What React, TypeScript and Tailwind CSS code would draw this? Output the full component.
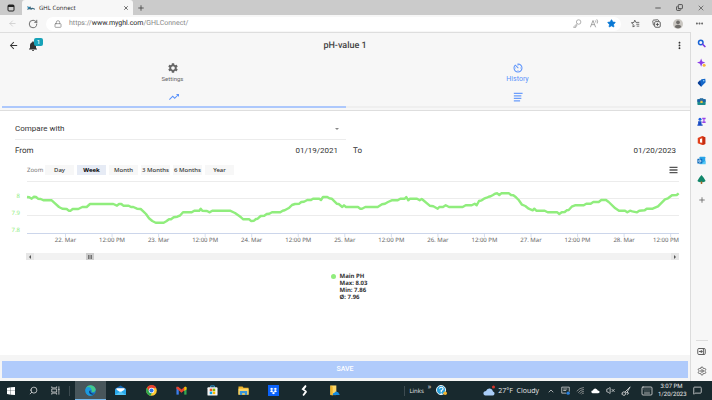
import React from "react";
import {
  MdArrowBack,
  MdNotifications,
  MdMoreVert,
  MdSettings,
  MdTrendingUp,
  MdAvTimer,
} from "react-icons/md";
import {
  ArrowLeft,
  ChevronUp,
  Keyboard,
  Lock,
  Minus,
  MoreHorizontal,
  Plus,
  RotateCw,
  Search,
  Settings,
  Star,
  Copy,
  MessageSquare,
  VolumeX,
  X,
} from "lucide-react";

type ArtProps = { className?: string; children: React.ReactNode };

function Art({ className = "size-[10px]", children }: ArtProps) {
  return (
    <svg viewBox="0 0 24 24" className={className} fill="none" aria-hidden="true">
      {children}
    </svg>
  );
}

/* ---------- Browser chrome ---------- */

function TabStrip() {
  return (
    <div className="flex h-[15px] shrink-0 items-center bg-[#cbcbcb] text-[#444]">
      <button aria-label="Tab actions" className="flex w-[22px] justify-center">
        <Art className="size-[8px]">
          <rect x="3" y="3" width="18" height="18" rx="3" stroke="#222" strokeWidth="3" />
          <path d="M3 3h18v6H3z" fill="#222" />
        </Art>
      </button>
      <div className="flex h-full w-[111px] items-center rounded-t-[3px] bg-[#f7f7f7] pr-1 pl-[5px]">
        <svg viewBox="0 0 24 14" className="h-[6px] w-[8px]" aria-hidden="true">
          <path d="M0 2l7 2 3-2 2 5 5-1 7 3v3l-7-2-4 2-5-1-8 1 3-5z" fill="#3e6a80" />
          <path d="M2 3l6 2-4 4z" fill="#2596c9" />
        </svg>
        <span className="ml-1 flex-1 text-[6px] leading-[8px] text-[#222]">GHL Connect</span>
        <button aria-label="Close tab">
          <X className="size-[6px]" strokeWidth={3} />
        </button>
      </div>
      <button aria-label="New tab" className="ml-1">
        <Plus className="size-[8px]" strokeWidth={2.5} />
      </button>
      <div className="ml-auto flex gap-[14px] pr-[7px]">
        <button aria-label="Minimize">
          <Minus className="size-[8px]" strokeWidth={2.5} />
        </button>
        <button aria-label="Restore">
          <Copy className="size-[7px] -scale-x-100 rotate-180" strokeWidth={3} />
        </button>
        <button aria-label="Close window">
          <X className="size-[8px]" strokeWidth={2} />
        </button>
      </div>
    </div>
  );
}

function Toolbar() {
  return (
    <div className="flex h-[17px] shrink-0 items-center bg-[#f7f7f7] pr-2 pl-2 text-[#555]">
      <button aria-label="Back" className="text-[#c8c8c8]">
        <ArrowLeft className="size-[9px]" />
      </button>
      <button aria-label="Reload" className="ml-[11px]">
        <RotateCw className="size-[10px]" />
      </button>
      <div className="ml-2 flex h-[14px] flex-1 items-center rounded-full bg-white pr-[5px] pl-2">
        <Lock className="size-[8px] text-[#777]" />
        <a href="#top" className="ml-[7px] flex-1 font-[Roboto,sans-serif] text-[7px] leading-[9px] text-[#888]">
          https://<span className="text-[#222]">www.myghl.com</span>/GHLConnect/
        </a>
        <div className="flex items-center gap-2">
          <button aria-label="Passwords">
            <Art className="size-[9px]">
              <circle cx="15" cy="8" r="6" stroke="#999" strokeWidth="2" />
              <path d="M11 12l-9 9v2h5v-4h3v-4" stroke="#999" strokeWidth="2" />
            </Art>
          </button>
          <button aria-label="Read aloud">
            <Art className="size-[9px]">
              <path d="M1 22L8 4l7 18M4 15h8M14 4q2 2 1 5M18 1q4 5 1 11" stroke="#888" strokeWidth="2" />
            </Art>
          </button>
          <button aria-label="Favorite">
            <Star className="size-[9px] fill-[#0a78d4] text-[#0a78d4]" />
          </button>
        </div>
      </div>
      <div className="ml-[10px] flex items-center gap-[12px]">
        <button aria-label="Favorites">
          <Art className="size-[9px]">
            <path d="M10 3l-2 6-7 1 5 4-1 7 6-3M10 3l3 6h9M14 14h8M15 19h7" stroke="#444" strokeWidth="2" />
          </Art>
        </button>
        <button aria-label="Collections">
          <Art className="size-[9px]">
            <rect x="7" y="7" width="15" height="15" rx="3" stroke="#444" strokeWidth="2.2" />
            <path d="M14.500 10.500v8M10.500 14.500h8M4 17l-2-11q0-2 2-3l11-1q2 0 3 3" stroke="#444" strokeWidth="2.200" />
          </Art>
        </button>
        <button aria-label="Profile">
          <Art className="size-[10px]">
            <circle cx="12" cy="12" r="12" fill="#c9c6c1" />
            <circle cx="12" cy="8" r="4.500" fill="#6f6d6a" />
            <path d="M4 19q1-5 8-5t8 5q-8 7-16 0z" fill="#6f6d6a" />
          </Art>
        </button>
        <button aria-label="Settings and more">
          <MoreHorizontal className="size-[9px]" strokeWidth={3} />
        </button>
      </div>
    </div>
  );
}

const sideIcons: { label: string; art: React.ReactNode }[] = [
  {
    label: "Search",
    art: (
      <>
        <circle cx="10" cy="9" r="6" stroke="#1763d6" strokeWidth="4" />
        <path d="M15 14l6 6" stroke="#7a3be0" strokeWidth="4.500" strokeLinecap="round" />
      </>
    ),
  },
  {
    label: "Discover",
    art: (
      <>
        <path d="M11 1l3 8 8 3-8 3-3 8-3-8-8-3 8-3z" fill="#8a3ce8" />
        <circle cx="19" cy="19" r="4" fill="#f6b73c" />
      </>
    ),
  },
  {
    label: "Shopping",
    art: (
      <>
        <path d="M12 3l10-1 1 9-12 12-9-9z" fill="#1467c9" />
        <path d="M2 12l6-6 4 17-9-8z" fill="#0b3f96" />
        <circle cx="18" cy="7" r="2" fill="#9fdcff" />
      </>
    ),
  },
  {
    label: "Tools",
    art: (
      <>
        <path d="M8 7V4h8v3" stroke="#2a6b9c" strokeWidth="2" />
        <rect x="1" y="6" width="22" height="15" rx="2" fill="#1d8b8b" />
        <path d="M1 6h22v7H1z" fill="#1a5fa8" />
        <path d="M9 10h6v6H9z" fill="#f5c542" />
      </>
    ),
  },
  {
    label: "Games",
    art: (
      <>
        <circle cx="8" cy="6" r="4" fill="#1a5fe0" />
        <path d="M3 11h9v9h3v3H1v-3h2z" fill="#184bc4" />
        <path d="M14 2h9v4h-3v6h3v4h-9v-4h3V6h-3z" fill="#9a45e8" />
      </>
    ),
  },
  {
    label: "Office",
    art: (
      <>
        <path d="M14 0l8 3v18l-8 3-12-5V5z" fill="#e2401b" />
        <path d="M8 8l6-2v12l-6-1z" fill="#fff" />
        <path d="M15 1l7 2v18l-7 3z" fill="#c52d12" />
      </>
    ),
  },
  {
    label: "Outlook",
    art: (
      <>
        <rect x="7" y="2" width="15" height="18" rx="1" fill="#2aa4e8" />
        <path d="M7 13l8 5 8-6v10H7z" fill="#54c8f5" />
        <rect x="1" y="7" width="13" height="13" rx="1" fill="#0f6cbd" />
        <circle cx="7.500" cy="13.500" r="3" stroke="#fff" strokeWidth="2" />
      </>
    ),
  },
  {
    label: "Tree",
    art: (
      <>
        <path d="M12 0l6 7 5 9q-5 4-11 3-6 1-11-3l5-9z" fill="#12876a" />
        <path d="M10 17h4v7h-4z" fill="#a5692b" />
      </>
    ),
  },
];

function Sidebar() {
  return (
    <aside className="flex w-[22px] shrink-0 flex-col items-center border-l border-[#dcdcdc] bg-[#f7f7f7]">
      <div className="mt-[1px] flex w-full flex-col">
        {sideIcons.map((icon, i) => (
          <button
            key={icon.label}
            aria-label={icon.label}
            className={i % 2 ? "flex h-[19px] items-center justify-center" : "flex h-5 items-center justify-center"}
          >
            <Art className="size-[9px]">{icon.art}</Art>
          </button>
        ))}
        <button aria-label="Customize" className="flex h-[22px] items-center justify-center text-[#666]">
          <Plus className="size-[8px]" strokeWidth={2.5} />
        </button>
      </div>
      <div className="mt-auto flex w-3 flex-col items-center border-t border-[#ddd] text-[#555]">
        <button aria-label="Hide sidebar" className="flex h-5 items-center">
          <Art className="size-[9px]">
            <rect x="2" y="4" width="20" height="16" rx="3" stroke="#555" strokeWidth="2.500" />
            <path d="M17 5v14M5 12h9M10 8l4 4-4 4" stroke="#555" strokeWidth="2.500" />
          </Art>
        </button>
        <button aria-label="Sidebar settings" className="flex h-5 items-center">
          <Settings className="size-[10px]" />
        </button>
      </div>
    </aside>
  );
}

/* ---------- Page header ---------- */

function PageHeader() {
  return (
    <header className="shrink-0 border-t border-b border-[#dedede] bg-[#f7f7f7] font-[Roboto,sans-serif]">
      <div className="grid h-[25px] grid-cols-3 items-center px-2">
        <div className="flex items-center text-[#333]">
          <button aria-label="Go back">
            <MdArrowBack className="size-[11px]" />
          </button>
          <button aria-label="Notifications" className="relative ml-2">
            <MdNotifications className="size-3" />
            <span className="absolute -top-[2px] left-[7px] h-2 w-[9px] rounded-[2px] bg-[#17a2b8] text-center text-[6px] leading-[8px] font-medium text-white">
              1
            </span>
          </button>
        </div>
        <h1 className="text-center text-[9px] leading-[12px] font-medium text-[#444]">pH-value 1</h1>
        <button aria-label="More options" className="-mr-[3px] justify-self-end text-[#333]">
          <MdMoreVert className="size-[11px]" />
        </button>
      </div>
      <nav className="grid h-[29px] grid-cols-2">
        <button className="flex flex-col items-center pt-1 text-[#666]">
          <MdSettings className="size-3" />
          <span className="text-[6px] leading-[10px]">Settings</span>
        </button>
        <button className="flex flex-col items-center pt-1 text-[#5b93fb]">
          <MdAvTimer className="size-3" />
          <span className="text-[7px] leading-[10px]">History</span>
        </button>
      </nav>
      <nav className="grid h-[23px] grid-cols-2 pb-[2px] pl-[2px]">
        <button
          aria-label="Chart view"
          className="flex items-center justify-center border-b-2 border-[#adc8fc] text-[#5b93fb]"
        >
          <MdTrendingUp className="size-3" />
        </button>
        <button aria-label="List view" className="flex items-center justify-center border-b-2 border-[#efefef]">
          <Art className="size-[10px]">
            <path d="M2 3h21M2 9h18M2 15h18M2 21h15" stroke="#6b9dfb" strokeWidth="3" />
          </Art>
        </button>
      </nav>
    </header>
  );
}

/* ---------- Filter form ---------- */

function Filters() {
  return (
    <form className="text-[8px] leading-[10px] font-[Roboto,sans-serif] text-[#333]">
      <div className="relative ml-[15px] flex h-[29px] w-[48%] items-center border-b border-[#ececec] pt-2">
        <select aria-label="Compare with" className="w-full appearance-none bg-transparent outline-none">
          <option>Compare with</option>
        </select>
        <span className="pointer-events-none absolute right-[7px] border-x-2 border-t-2 border-x-transparent border-t-[#888]" />
      </div>
      <div className="grid h-[22px] grid-cols-2 items-center">
        <div className="flex items-center pr-[7px] pl-[15px]">
          <label htmlFor="from">From</label>
          <input id="from" defaultValue="01/19/2021" className="w-0 flex-1 bg-transparent text-right outline-none" />
        </div>
        <div className="flex items-center pr-[14px] pl-2">
          <label htmlFor="to">To</label>
          <input id="to" defaultValue="01/20/2023" className="w-0 flex-1 bg-transparent text-right outline-none" />
        </div>
      </div>
    </form>
  );
}

/* ---------- Chart ---------- */

const ranges = ["Day", "Week", "Month", "3 Months", "6 Months", "Year"];

const blocks: { offset: number; samples: number[][] }[] = [
  {
    offset: 0,
    samples: [
      [81, 261], [88, 262], [95, 266], [102, 260], [108, 261], [114, 266], [122, 267], [130, 271], [155, 271],
      [165, 280], [177, 291], [187, 296], [200, 297], [206, 302], [212, 302], [218, 297], [235, 297], [247, 291],
      [260, 291], [270, 282], [340, 282], [351, 287], [357, 282], [364, 282], [370, 287], [386, 287], [393, 291],
      [400, 291], [411, 296], [422, 297], [430, 304], [438, 312], [447, 325], [457, 333], [467, 338], [491, 338],
      [499, 334], [507, 328], [513, 328], [521, 322], [532, 320], [541, 316], [549, 307], [575, 307], [583, 302],
      [598, 302], [602, 296], [607, 302], [621, 303], [629, 307], [637, 302], [690, 302], [705, 309], [718, 318],
    ],
  },
  {
    offset: 720,
    samples: [
      [3, 322], [10, 328], [28, 328], [33, 333], [42, 332], [48, 327], [53, 326], [62, 318], [73, 317], [80, 312],
      [88, 311], [96, 307], [121, 307], [128, 302], [134, 301], [148, 293], [156, 285], [165, 282], [178, 281],
      [184, 276], [192, 275], [202, 270], [213, 270], [219, 266], [238, 266], [243, 270], [249, 261], [262, 261],
      [268, 265], [275, 266], [284, 275], [290, 281], [296, 282], [307, 291], [312, 286], [318, 291], [354, 291],
      [361, 296], [366, 296], [376, 291], [413, 291], [426, 283], [435, 281], [444, 276], [455, 271], [473, 271],
      [481, 266], [494, 266], [499, 261], [505, 271], [510, 266], [531, 266], [539, 271], [545, 267], [550, 271],
      [569, 287], [580, 289], [593, 296], [598, 291], [609, 291], [617, 286], [627, 291], [668, 291], [677, 286],
      [695, 286], [704, 281], [710, 286],
    ],
  },
  {
    offset: 1410,
    samples: [
      [27, 273], [35, 271], [42, 266], [50, 263], [56, 260], [62, 259], [69, 255], [75, 251], [82, 250], [88, 255],
      [94, 250], [117, 250], [123, 255], [130, 256], [138, 262], [146, 270], [156, 284], [166, 288], [176, 296],
      [188, 301], [193, 296], [199, 302], [224, 302], [233, 307], [262, 307], [268, 312], [275, 307], [284, 306],
      [290, 301], [296, 300], [305, 290], [315, 286], [341, 286], [349, 281], [362, 281], [370, 276], [386, 276],
      [394, 270], [408, 270], [416, 276], [436, 295], [447, 302], [465, 302], [472, 307], [480, 302], [487, 304],
      [501, 307], [508, 302], [524, 301], [530, 296], [548, 296], [564, 289], [585, 268], [594, 265], [606, 256],
      [620, 255], [626, 250],
    ],
  },
];

const points = blocks
  .flatMap(({ offset, samples }) => samples.map(([x, y]) => `${((x + offset) / 3).toFixed(1)},${(y / 3 - 66).toFixed(1)}`))
  .join(" ");

const ticks = Array.from({ length: 14 }, (_, i) => ({
  x: 65.5 + i * 46.55,
  label: i % 2 ? "12:00 PM" : `${22 + i / 2}. Mar`,
}));

function Chart() {
  return (
    <section className="font-['Noto_Sans',sans-serif] text-[6px] leading-[8px] text-[#333]">
      <div className="flex h-[16px] items-center pr-3 pl-[27px]">
        <span className="w-[18px] text-[#777]">Zoom</span>
        <div className="flex gap-[3px]">
          {ranges.map((r) => (
            <button
              key={r}
              className={
                r === "Week"
                  ? "h-[10px] w-[29px] bg-[#e6ebf5] font-bold whitespace-nowrap text-black"
                  : "h-[10px] w-[29px] bg-[#f7f7f7] font-medium whitespace-nowrap"
              }
            >
              {r}
            </button>
          ))}
        </div>
        <button aria-label="Chart menu" className="ml-auto">
          <Art className="h-[8px] w-[9px]">
            <path d="M0 4h24M0 12h24M0 20h24" stroke="#555" strokeWidth="4" />
          </Art>
        </button>
      </div>
      <svg viewBox="0 2 690 75" className="block w-full" role="img" aria-label="Main PH">
        <path d="M27 5.500H679M27 22.500H679M27 39.500H679" stroke="#ececec" />
        <path d="M27 57.500H679" stroke="#ccd6eb" />
        {ticks.map((t) => (
          <path key={t.x} d={`M${t.x} 57v4`} stroke="#ccd6eb" strokeWidth="0.800" />
        ))}
        <polyline points={points} fill="none" stroke="#90ed7d" strokeWidth="2.400" strokeLinejoin="round" />
        <g fill="#90ed7d" textAnchor="end">
          <text x="20" y="22">8</text>
          <text x="20" y="39">7.9</text>
          <text x="20" y="56">7.8</text>
        </g>
        <g fill="#666">
          {ticks.map((t, i) => (
            <text key={t.x} x={i === 13 ? 679 : t.x} y="66" textAnchor={i === 13 ? "end" : "middle"}>
              {t.label}
            </text>
          ))}
        </g>
      </svg>
      <div className="mr-[11px] ml-[26px] flex h-[7px] justify-between bg-[#f2f2f2]">
        <div className="flex gap-[52px]">
          <button aria-label="Scroll left" className="flex w-2 items-center justify-center bg-[#e6e6e6]">
            <span className="border-y-2 border-r-2 border-y-transparent border-r-[#555]" />
          </button>
          <button aria-label="Scroll thumb" className="flex w-2 items-center justify-center bg-[#ccc]">
            <Art className="size-1">
              <path d="M3 0v24M12 0v24M21 0v24" stroke="#444" strokeWidth="4" />
            </Art>
          </button>
        </div>
        <button aria-label="Scroll right" className="flex w-2 items-center justify-center bg-[#e6e6e6]">
          <span className="border-y-2 border-l-2 border-y-transparent border-l-[#555]" />
        </button>
      </div>
      <div className="mt-[13px] flex justify-center gap-1 pl-2 leading-[7px] font-bold">
        <span className="mt-[1px] size-[5px] rounded-full bg-[#90ed7d]" />
        <p>
          Main PH
          <br />
          Max: 8.03
          <br />
          Min: 7.86
          <br />
          Ø: 7.96
        </p>
      </div>
    </section>
  );
}

/* ---------- Taskbar ---------- */

const apps: { label: string; art: React.ReactNode }[] = [
  {
    label: "Edge",
    art: (
      <>
        <circle cx="12" cy="12" r="11.500" fill="#1a7fd0" />
        <path d="M1 10Q4 0 13 .5q9 1 10.500 10-1 7-9 5 2-6-4-7-6 0-9.500 1.500z" fill="#43c98b" />
        <path d="M1 10q3-7 9-5 5 2 3 6-4 0-4 4 2 7 11 4-5 6-12 4Q0 19 1 10z" fill="#1c9be0" />
        <path d="M9 13q-1 8 8 8l4-2q-5 1-8-2-2-2-1-5z" fill="#123f78" />
      </>
    ),
  },
  {
    label: "Mail",
    art: (
      <>
        <path d="M0 8l12-7 12 7v14H0z" fill="#1268b4" />
        <path d="M3 7h18v9H3z" fill="#fff" />
        <path d="M0 8l12 8 12-8v14H0z" fill="#2aa8ea" />
        <path d="M0 22l12-8 12 8z" fill="#54c6f7" />
      </>
    ),
  },
  {
    label: "Chrome",
    art: (
      <>
        <circle cx="12" cy="12" r="11.500" fill="#fcc934" />
        <path d="M2 6A11.500 11.500 0 0 1 22.500 7H12l-5 8z" fill="#e8402f" />
        <path d="M2 6l5.500 9L13 17l-3 6.500A11.500 11.500 0 0 1 2 6z" fill="#2da94f" />
        <circle cx="12" cy="12" r="6" fill="#fff" />
        <circle cx="12" cy="12" r="4.500" fill="#2a75e8" />
      </>
    ),
  },
  {
    label: "Gmail",
    art: (
      <>
        <path d="M1 5h5v16H1z" fill="#3c7fee" />
        <path d="M18 5h5v16h-5z" fill="#32a852" />
        <path d="M1 4h4l7 6 7-6v7l-7 6-7-6-4-3z" fill="#e8432f" />
        <path d="M18 5l2-2 3 2v5l-5 3z" fill="#fbbc05" />
      </>
    ),
  },
  {
    label: "Store",
    art: (
      <>
        <path d="M8 6V2h8v4" stroke="#37a8e8" strokeWidth="2" />
        <rect x="1" y="5" width="22" height="18" rx="2" fill="#f4f4f4" />
        <path d="M6 8h5.500v5.500H6z" fill="#f05022" />
        <path d="M12.500 8H18v5.500h-5.500z" fill="#7fba00" />
        <path d="M6 14.500h5.500V20H6z" fill="#00a4ef" />
        <path d="M12.500 14.500H18V20h-5.500z" fill="#ffb900" />
      </>
    ),
  },
  {
    label: "File Explorer",
    art: (
      <>
        <path d="M1 3h9l2 3h11v15H1z" fill="#f0b429" />
        <path d="M1 8h22v13H1z" fill="#fcd667" />
        <path d="M4 13h16v9h-5v-4H9v4H4z" fill="#3a94d8" />
      </>
    ),
  },
  {
    label: "Dropbox",
    art: (
      <>
        <path d="M0 0h24v24H0z" fill="#0a62fb" />
        <path d="M8 6l4 2.500L8 11 4 8.500zM16 6l4 2.500-4 2.500-4-2.500zM8 11l4 2.500L8 16l-4-2.500zM16 11l4 2.500-4 2.500-4-2.500zM12 15l4 2.500-4 2.500-4-2.500z" fill="#fff" />
      </>
    ),
  },
  {
    label: "Sync",
    art: <path d="M15 1L8 9l7 5-6 9M15 2l-5 7M16 14l-6 8" stroke="#fff" strokeWidth="3.500" />,
  },
  {
    label: "Cloud folder",
    art: (
      <>
        <path d="M3 1h13v21H3z" fill="#fcd667" />
        <path d="M3 1l5 3v19l-5-2z" fill="#f0b429" />
        <path d="M8 21q0-4 4-4 2-4 6-2 3 0 3 3 3 1 2 4H9z" fill="#168be0" />
      </>
    ),
  },
];

function Taskbar() {
  return (
    <footer className="flex h-[19px] shrink-0 items-center bg-[#18292e] text-[#e8e8e8]">
      <button aria-label="Start" className="flex w-[22px] justify-center">
        <Art className="size-2">
          <path d="M0 3l11-2v10H0zM12 1l12-1v11H12zM0 12h11v11L0 21zM12 12h12v12l-12-1z" fill="#fff" />
        </Art>
      </button>
      <button aria-label="Search" className="flex w-[22px] justify-center">
        <Search className="size-[9px] -scale-x-100" />
      </button>
      <button aria-label="Task view" className="flex w-[22px] justify-center">
        <Art className="size-[9px]">
          <path d="M2 1v4h13V1M2 23v-4h13v4M2 8h13v8H2zM21 1v22M19 9h4" stroke="#ddd" strokeWidth="2" />
        </Art>
      </button>
      <span className="ml-[3px] h-[10px] w-px bg-[#3d4b50]" />
      <div className="ml-[5px] grid h-full w-[275px] grid-cols-9">
        {apps.map((app, i) => (
          <button
            key={app.label}
            aria-label={app.label}
            className={
              i === 0
                ? "flex items-center justify-center border-b border-[#76b9ed] bg-[#48565b]"
                : "flex items-center justify-center"
            }
          >
            <Art className="size-[11px]">{app.art}</Art>
          </button>
        ))}
      </div>
      <div className="ml-auto flex items-center">
        <span className="h-[10px] w-px bg-[#3d4b50]" />
        <span className="ml-1 text-[6px] leading-[8px]">Links</span>
        <button aria-label="More links" className="mb-2 ml-1 text-[7px] leading-[8px]">
          »
        </button>
        <button aria-label="Help" className="ml-[5px]">
          <Art className="size-[11px]">
            <circle cx="11" cy="11" r="10" fill="#2ba0d8" stroke="#fff" strokeWidth="2" />
            <path d="M7.500 8q1-3 4-3 4 0 4 3t-4 4v3M11.500 17v2" stroke="#fff" strokeWidth="2.500" />
            <circle cx="20" cy="18" r="4" fill="#f5b52e" />
          </Art>
        </button>
        <button className="ml-9 flex items-center text-[7px] leading-[9px]">
          <Art className="mr-[3px] size-3">
            <path d="M5 21q-5-1-4-6 1-3 5-3 2-6 8-5 5 1 6 6 4 1 3 5-1 3-4 3z" fill="#a9cdf8" />
            <circle cx="21" cy="4" r="3" fill="#d8352a" />
          </Art>
          27°F&nbsp; Cloudy
        </button>
      </div>
      <div className="ml-2 flex items-center gap-[6px]">
        <ChevronUp className="size-2" />
        <Art className="size-[9px]">
          <path d="M2 3h20v12M2 3v16h12M6 8h11M6 12h8" stroke="#ddd" strokeWidth="2" />
          <circle cx="19" cy="19" r="4.500" fill="#2a80dc" />
        </Art>
        <Art className="size-[9px]">
          <path d="M2 14Q9 5 21 4M6 18Q11 10 21 9M10 21q3-6 11-7M15 22q2-3 6-3" stroke="#aaa" strokeWidth="2" />
        </Art>
        <Art className="size-[9px]">
          <path d="M4 19q-4-1-3-5 1-3 4-2 2-6 8-5 4 1 5 5 5 0 5 4 0 3-4 3z" fill="#fff" />
        </Art>
        <VolumeX className="size-[9px]" />
        <Art className="size-[10px]">
          <path d="M22 2L9 15M22 2l-8 14M2 20q0-6 5-6t4 5-6 3q-3-1-1-4M13 16q5-2 5 1t-4 3" stroke="#ddd" strokeWidth="2" />
        </Art>
        <Keyboard className="ml-1 size-3" strokeWidth={1.5} />
      </div>
      <time className="ml-[5px] w-[27px] text-center font-[Roboto,sans-serif] text-[6px] leading-[8px] whitespace-nowrap">
        3:07 PM
        <br />
        1/20/2023
      </time>
      <button aria-label="Action center" className="mr-[10px] ml-2">
        <MessageSquare className="size-[9px]" />
      </button>
    </footer>
  );
}

export default function App() {
  return (
    <div className="flex h-screen flex-col overflow-hidden bg-white font-['Open_Sans','Noto_Sans',sans-serif] [text-rendering:geometricPrecision]">
      <TabStrip />
      <Toolbar />
      <div className="flex min-h-0 flex-1">
        <main className="flex min-w-0 flex-1 flex-col">
          <PageHeader />
          <div className="min-h-0 flex-1">
            <Filters />
            <Chart />
          </div>
          <div className="bg-[#f5f5f5] px-[2px] pt-[6px] pb-[3px]">
            <button className="block h-[17px] w-full bg-[#b0cbfb] text-center font-[Roboto,sans-serif] text-[7px] font-medium text-white">
              SAVE
            </button>
          </div>
        </main>
        <Sidebar />
      </div>
      <Taskbar />
    </div>
  );
}
